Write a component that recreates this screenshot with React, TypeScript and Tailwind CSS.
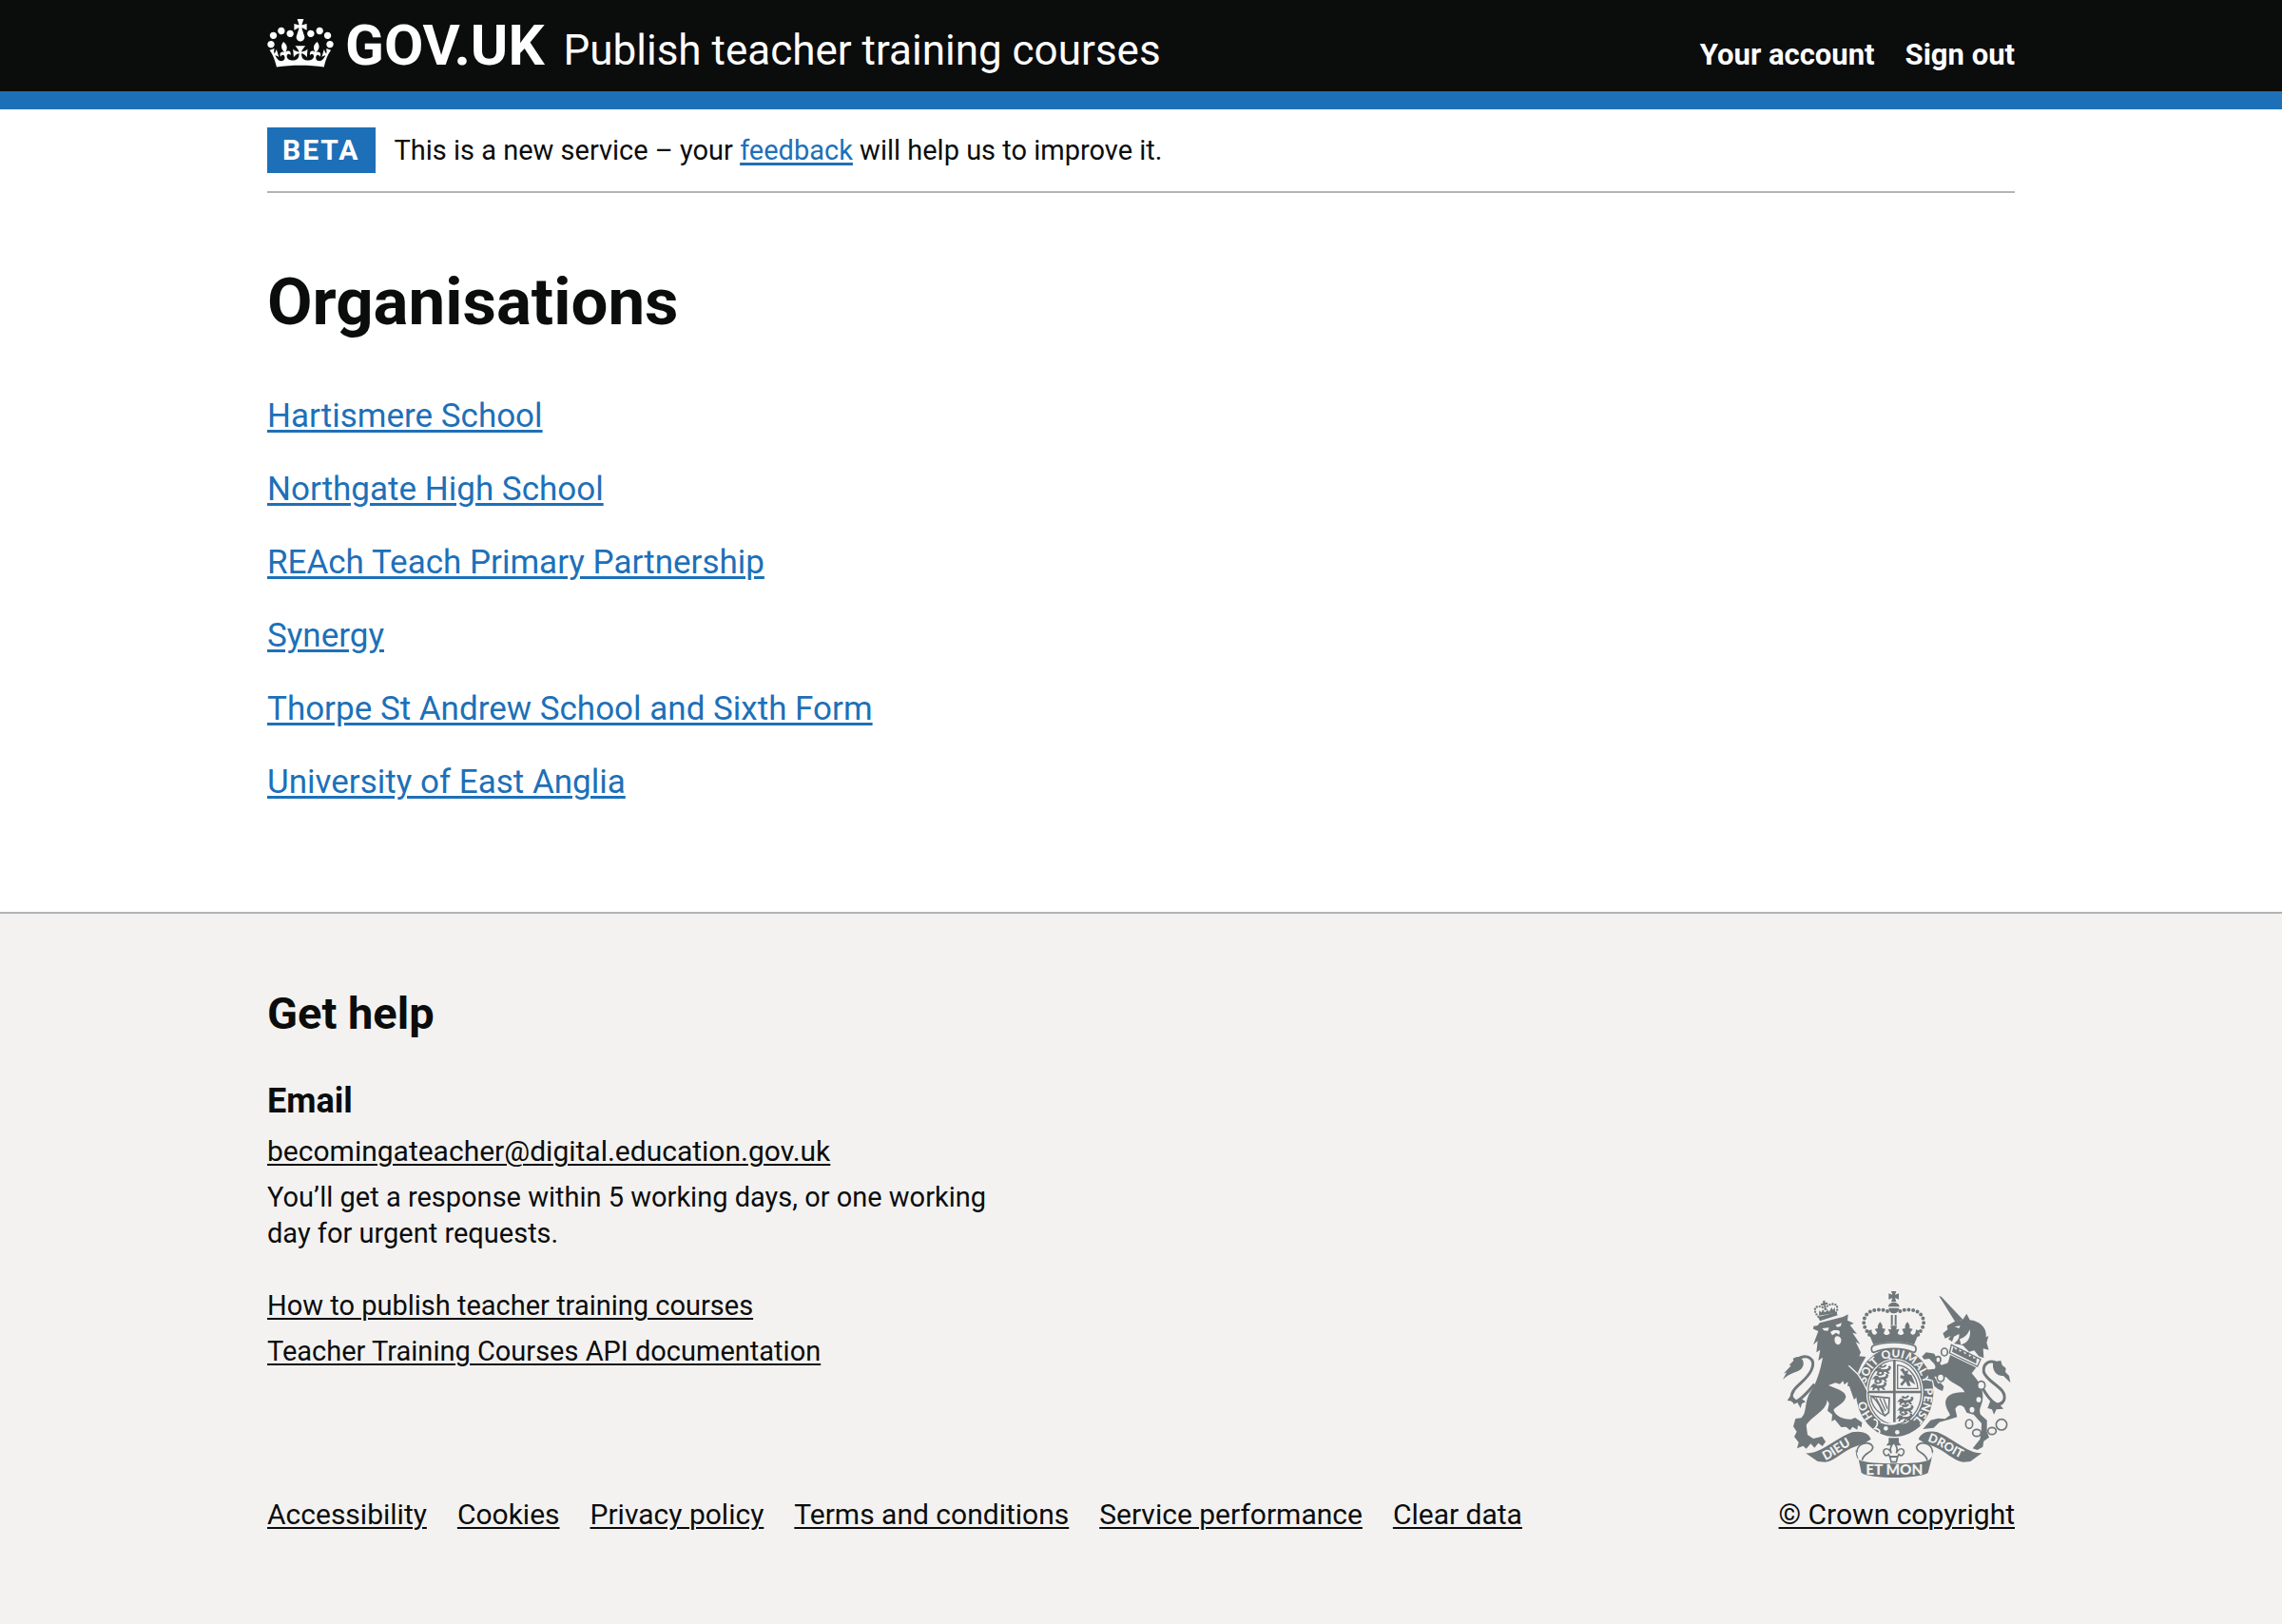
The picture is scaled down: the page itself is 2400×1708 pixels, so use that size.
import React from "react";

const organisations = [
  "Hartismere School",
  "Northgate High School",
  "REAch Teach Primary Partnership",
  "Synergy",
  "Thorpe St Andrew School and Sixth Form",
  "University of East Anglia",
];

const footerLinks = [
  "Accessibility",
  "Cookies",
  "Privacy policy",
  "Terms and conditions",
  "Service performance",
  "Clear data",
];

function Crown() {
  return (
    <svg viewBox="0 0 132 97" className="mt-0.5 h-[51px] w-[70px] shrink-0 self-start fill-white" aria-hidden="true">
      <path
        fillRule="evenodd"
        d="M25 30.2c3.5 1.5 7.7-.2 9.1-3.7 1.5-3.6-.2-7.8-3.9-9.2-3.6-1.4-7.6.3-9.1 3.9-1.4 3.5.3 7.5 3.9 9zM9 39.5c3.6 1.5 7.8-.2 9.2-3.7 1.5-3.6-.2-7.8-3.9-9.1-3.6-1.5-7.6.2-9.1 3.8-1.4 3.5.3 7.5 3.8 9zM4.4 57.2c3.5 1.5 7.7-.2 9.1-3.8 1.5-3.6-.2-7.7-3.9-9.1-3.5-1.5-7.6.3-9.1 3.8-1.4 3.5.3 7.6 3.9 9.1zm38.3-21.4c3.5 1.5 7.7-.2 9.1-3.8 1.5-3.6-.2-7.7-3.9-9.1-3.6-1.5-7.6.3-9.1 3.8-1.3 3.6.4 7.7 3.9 9.1zm64.4-5.6c-3.6 1.5-7.8-.2-9.1-3.7-1.5-3.6.2-7.8 3.8-9.2 3.6-1.4 7.7.3 9.2 3.9 1.3 3.5-.4 7.5-3.9 9zm15.9 9.3c-3.6 1.5-7.7-.2-9.1-3.7-1.5-3.6.2-7.8 3.7-9.1 3.6-1.5 7.7.2 9.2 3.8 1.5 3.5-.3 7.5-3.8 9zm4.7 17.7c-3.6 1.5-7.8-.2-9.2-3.8-1.5-3.6.2-7.7 3.9-9.1 3.6-1.5 7.7.3 9.2 3.8 1.3 3.5-.4 7.6-3.9 9.1zM89.3 35.8c-3.6 1.5-7.8-.2-9.2-3.8-1.4-3.6.2-7.7 3.9-9.1 3.6-1.5 7.7.3 9.2 3.8 1.4 3.6-.3 7.7-3.9 9.1zM69.7 17.7l8.9 4.7V9.3l-8.9 2.8c-.2-.3-.5-.6-.9-.9L72.4 0H59.6l3.5 11.2c-.3.3-.6.5-.9.9l-8.8-2.8v13.1l8.8-4.7c.3.3.6.7.9.9l-5 15.4v.1c-.2.8-.4 1.6-.4 2.4 0 4.1 3.1 7.5 7 8.1h.2c.3 0 .7.1 1 .1.4 0 .7 0 1-.1h.2c4-.6 7.1-4.1 7.1-8.1 0-.8-.1-1.7-.4-2.4V34l-5.1-15.4c.4-.2.7-.6 1-.9zM66 92.8c16.9 0 32.8 1.1 47.1 3.2 4-16.9 8.9-26.7 14-33.5l-9.6-3.4c1 4.9 1.1 7.2 0 10.2-1.5-1.4-3-4.3-4.2-8.7L108.6 76c2.8-2 5-3.2 7.5-3.3-4.4 9.4-10 11.9-13.6 11.2-4.3-.8-6.3-4.6-5.6-7.9 1-4.7 5.7-5.9 8-.5 4.3-8.7-3-11.4-7.6-8.8 7.1-7.2 7.9-13.5 2.1-21.1-8 6.1-8.1 12.3-4.5 20.8-4.7-5.4-12.1-2.5-9.5 6.2 3.4-5.2 7.9-2 7.2 3.1-.6 4.3-6.4 7.8-13.5 7.2-10.3-.9-10.9-8-11.2-13.8 2.5-.5 7.1 1.8 11 7.3L80.2 60c-4.1 4.4-8 5.3-12.3 5.4 1.4-4.4 8-11.6 8-11.6H55.5s6.4 7.2 7.9 11.6c-4.2-.1-8-1-12.3-5.4l1.4 16.4c3.9-5.5 8.5-7.7 10.9-7.3-.3 5.8-.9 12.8-11.1 13.8-7.2.6-12.9-2.9-13.5-7.2-.7-5 3.8-8.3 7.1-3.1 2.7-8.7-4.6-11.6-9.4-6.2 3.7-8.5 3.6-14.7-4.6-20.8-5.8 7.6-5 13.9 2.2 21.1-4.7-2.6-11.9.1-7.7 8.8 2.3-5.5 7.1-4.2 8.1.5.7 3.3-1.3 7.1-5.7 7.9-3.5.7-9-1.8-13.5-11.2 2.5.1 4.7 1.3 7.5 3.3l-4.7-15.4c-1.2 4.4-2.7 7.2-4.3 8.7-1.1-3-.9-5.3 0-10.2l-9.5 3.4c5 6.9 9.9 16.7 14 33.5 14.8-2.1 30.8-3.2 47.7-3.2z"
      />
    </svg>
  );
}

const INK = "#6f777a";
const PAPER = "#f3f2f1";

function SmallLion({ x, y }: { x: number; y: number }) {
  return (
    <path
      transform={`translate(${x} ${y})`}
      d="M0 8l6-6 8 1 4 5 14-1 8-4-2-5 6-2 4 6-4 8-6 4 6 6-6 2-8-7-6 2 2 6-6 1-3-8-6 1-4 6-5-1 3-8-5-1-5 3zM8-2l6-4 8 4 8-6 4 4-8 6-10 1z"
      fill={INK}
    />
  );
}

function RoyalArms() {
  return (
    <svg viewBox="72 57 720 588" className="h-[196px] w-[240px]" fill={INK} aria-hidden="true">
      {/* lion supporter */}
      <path d="M112 274C150 250 178 270 162 306C144 346 96 360 100 394C104 420 130 400 172 350" fill="none" stroke={INK} strokeWidth="9" />
      <path d="M72 336L84 313L74 317L98 292L92 290L106 276L104 270C126 254 148 280 132 300C122 314 94 312 72 336Z" />
      <path d="M98 384L86 402L104 404L106 414L118 408L128 426L132 412L144 406L134 398L116 402Z" />
      <path d="M188 157L262 138L278 130L276 149L296 158L284 164L306 192L292 188L316 224L302 217L318 250L313 262L334 264L320 288L306 320L324 345L336 370L333 398L323 388L316 402L307 390L297 398L291 380L300 371L287 367L292 355L276 357L278 342L266 352L262 340L252 350L238 346L216 354C240 364 270 372 271 390C268 412 238 420 232 432C240 452 262 462 288 461L300 456L322 471L320 487L309 480L307 494L292 485L284 496L272 485L256 486L236 462L226 468L228 446L213 434L218 412L212 400C210 436 164 450 146 480L150 510L168 522L196 515L207 532L197 546L184 536L172 551L160 538L146 554L136 545L117 553L122 534L108 516L116 500L105 484L112 459L130 457C150 440 138 404 162 370C178 346 190 310 198 266L184 276L190 242L178 250L182 214L168 226L184 183L168 176L169 167L182 165Z" />
      <path d="M196 174L218 172L214 182L202 181ZM238 164L258 157L254 168L244 170ZM222 186L232 180L246 180L252 184L250 194L240 188L228 196Z" fill={PAPER} />
      <path d="M236 204C240 196 252 198 256 208C258 220 250 228 244 225C236 222 234 214 236 204Z" fill={PAPER} />
      {/* lion's crown */}
      <path d="M183 138L241 124L245 133L189 151Z" />
      <path d="M184 137C164 116 174 98 198 108M240 124C252 104 236 88 212 104" fill="none" stroke={INK} strokeWidth="7" strokeLinecap="round" strokeDasharray="0 9" />
      <path d="M186 134L187 118L194 124L198 114L204 124L212 118L210 110L218 122L226 108L230 116L236 108L238 126ZM198 88L206 86L205 93L213 92L214 99L206 98L210 116L203 118L202 101L193 103L192 96L199 95Z" />

      {/* garter */}
      <ellipse cx="425" cy="376" rx="126" ry="144" fill={PAPER} />
      <ellipse cx="425" cy="376" rx="122" ry="140" />
      <ellipse cx="425" cy="376" rx="90" ry="107" fill={PAPER} />
      <ellipse cx="425" cy="376" rx="84" ry="101" fill="none" stroke={INK} strokeWidth="4" />
      <path d="M420 276H428V470H420ZM341 371H509V379H341Z" />
      <path id="garter-line" d="M394 481A94 111 0 1 1 456 481" fill="none" />
      <g fill={PAPER} className="font-[Lato] text-[36px] font-black" textAnchor="middle">
        <text><textPath href="#garter-line" startOffset="13%">HO</textPath></text>
        <text><textPath href="#garter-line" startOffset="34%">SOIT</textPath></text>
        <text><textPath href="#garter-line" startOffset="49%">QUI</textPath></text>
        <text><textPath href="#garter-line" startOffset="62%">MAL</textPath></text>
        <text><textPath href="#garter-line" startOffset="71%">Y</textPath></text>
        <text><textPath href="#garter-line" startOffset="85%">PENSE</textPath></text>
      </g>
      {/* lion's foreleg resting on the garter */}
      <path d="M284 290L312 318L326 346L337 370L334 398L324 388L316 402L307 390L297 398L290 380L276 340Z" />
      <path d="M280 292L308 318L326 346L340 374" fill="none" stroke={PAPER} strokeWidth="4" />
      {/* quarterings */}
      <SmallLion x={366} y={296} />
      <SmallLion x={358} y={321} />
      <SmallLion x={352} y={347} />
      <SmallLion x={437} y={393} />
      <SmallLion x={437} y={420} />
      <SmallLion x={434} y={446} />
      <path d="M434 290C468 292 496 326 498 364H434Z" fill="none" stroke={INK} strokeWidth="4" />
      <path d="M442 304L452 300L458 310L468 306L466 318L478 322L490 352L480 346L470 338L476 356L466 356L460 342L448 356L442 350L454 336L442 330L444 322L456 324L450 314Z" />
      <path d="M352 388L408 394L406 440L394 450C382 438 382 410 352 388Z" fill="none" stroke={INK} strokeWidth="5" />
      <path d="M350 388C350 418 372 442 396 450M366 394L390 438M378 395L396 434M390 396L402 428" fill="none" stroke={INK} strokeWidth="4" />
      {/* buckle and strap */}
      <path d="M356 458C376 458 372 480 396 476C430 480 470 476 500 462L506 482C470 514 410 524 368 500L352 478Z" />
      <path d="M358 462C374 460 374 480 362 490C380 492 380 502 374 506M380 470C420 484 440 474 456 460" fill="none" stroke={PAPER} strokeWidth="5" />
      <circle cx="397" cy="490" r="7" fill={PAPER} />
      <circle cx="433" cy="502" r="7" fill={PAPER} />

      {/* imperial crown */}
      <path d="M414 57H430L426 68L438 64V83L426 78L430 90H414L418 78L406 83V64L418 68Z" />
      <path d="M405 106C406 88 438 88 440 106ZM406 110H439C438 122 430 127 422 127C414 127 407 122 406 110Z" />
      <path d="M413 132H419V164H413ZM425 132H431V164H425Z" />
      <path d="M402 120C384 112 336 110 328 148C325 172 340 184 346 196M442 120C460 112 508 110 516 148C519 172 504 184 498 196" fill="none" stroke={INK} strokeWidth="12" strokeLinecap="round" strokeDasharray="0 14" />
      <path d="M340 182L352 178C352 190 356 196 364 194L370 188L362 176L372 174C370 166 374 160 379 154C384 160 388 166 386 174L396 176L390 190C396 198 404 196 410 190L404 176L414 178L412 166H432L430 178L440 176L434 190C440 196 448 198 454 190L448 176L458 174C456 166 460 160 465 154C470 160 474 166 472 174L482 176L474 188L480 194C488 196 492 190 492 178L504 182L486 226C450 214 394 214 358 226Z" />
      <path d="M360 228C394 216 450 216 484 228C496 230 494 250 484 250C450 234 394 234 360 250C350 250 348 230 360 228Z" fill={PAPER} stroke={INK} strokeWidth="5" />

      {/* unicorn supporter */}
      <path d="M704 366C724 400 754 434 770 400C782 362 716 346 706 312C702 282 728 272 748 284" fill="none" stroke={INK} strokeWidth="9" />
      <path d="M736 280L760 276L764 290L776 300L774 312L786 324L790 346L768 324C748 326 730 308 736 280Z" />
      <path d="M728 400L718 426L732 430L738 446L746 430L768 428L758 416L766 402L744 414Z" />
      <path d="M565 72L572 74L640 146L616 154Z" />
      <path d="M612 154L640 146L652 128L662 148C690 150 718 172 713 202L721 198L715 220L722 242L704 238L706 268L690 262L676 244L660 248L640 228L612 222C626 212 630 202 628 192L612 200L606 216L594 208L602 198L584 206L577 190L592 178L590 166Z" />
      <path d="M614 169L632 166L628 174ZM634 226C658 220 666 200 662 178C654 196 644 204 630 208Z" fill={PAPER} />
      <path d="M604 226L696 272L686 294L598 252Z" fill={PAPER} stroke={INK} strokeWidth="4" />
      <path d="M606 248L610 232L618 242L626 234L630 248L640 242L646 256L658 248L660 264L670 258L674 270L684 266L682 286Z" />
      <path d="M600 258L682 298L668 316C690 340 708 370 702 400C700 420 688 430 696 446L716 464L716 500L723 518L706 530L703 548L686 558L671 553L694 524L698 500L699 474L674 446L652 440L644 424C634 412 622 416 616 428L622 454L596 462L566 470L548 488L514 492L538 464L562 458L584 460L600 448C596 438 582 420 586 402C592 380 618 376 646 376C634 350 598 350 584 322L580 298L594 280Z" />
      <path d="M511 263L524 250L550 254L558 270L572 290L590 284V314L556 320L546 312C552 302 558 296 548 284L534 270L518 272Z" />
      <path d="M588 306L550 302L524 305L532 330L546 338L550 356L562 366L576 372L580 358L570 346L562 348L550 326L590 328Z" />
      <g fill={PAPER} stroke={INK} strokeWidth="5">
        <ellipse cx="582" cy="249" rx="10" ry="12" />
        <ellipse cx="562" cy="273" rx="8" ry="10" />
        <ellipse cx="570" cy="330" rx="11" ry="12" />
        <ellipse cx="698" cy="354" rx="12" ry="13" />
        <ellipse cx="690" cy="399" rx="10" ry="11" />
        <ellipse cx="669" cy="431" rx="10" ry="11" />
        <ellipse cx="660" cy="476" rx="11" ry="14" />
        <ellipse cx="684" cy="504" rx="13" ry="11" />
        <ellipse cx="732" cy="498" rx="13" ry="11" />
        <circle cx="762" cy="478" r="17" />
      </g>

      {/* motto ribbon */}
      <path d="M144 568C190 572 240 520 290 502C320 496 344 504 350 524L330 536L304 546C268 556 232 596 206 596L182 594Z" />
      <path d="M700 568C656 570 606 520 560 502C528 494 508 504 500 524L520 536L546 546C580 558 616 596 642 596L664 594Z" />
      <path d="M306 566C304 536 348 526 356 548C358 568 330 562 322 590M544 566C546 536 502 526 494 548C492 568 520 562 528 590" fill={PAPER} stroke={INK} strokeWidth="5" />
      <path d="M302 556C302 578 308 588 314 590C350 604 500 604 532 590C540 586 546 574 546 556L540 592L530 630C500 650 346 650 320 630L312 592Z" />
      <path id="dieu-line" d="M206 591C240 576 262 553 308 533" fill="none" />
      <path id="droit-line" d="M528 530C576 544 604 576 656 592" fill="none" />
      <g fill={PAPER} className="font-[Lato] font-black">
        <text className="text-[40px]"><textPath href="#dieu-line">DIEU</textPath></text>
        <text className="text-[38px]"><textPath href="#droit-line">DROIT</textPath></text>
        <text x="424" y="636" textAnchor="middle" className="text-[46px]">ET MON</text>
      </g>
      {/* fleur-de-lis */}
      <path d="M406 520H438V534L446 544H398L406 534Z" />
      <path d="M422 534C434 548 434 556 430 568C440 548 456 552 454 566C452 576 444 578 438 572L434 580L430 596H414L410 580L406 572C400 578 392 576 390 566C388 552 406 548 414 568C410 556 410 548 422 534Z" fill={PAPER} stroke={INK} strokeWidth="5" />
      <path d="M410 576H434V582H410Z" />
    </svg>
  );
}

const darkLink = "underline decoration-2 underline-offset-[3px]";

export default function App() {
  return (
    <div className="flex min-h-screen flex-col bg-white font-[Roboto,sans-serif] text-[#0b0c0c]">
      <header className="border-b-[19px] border-[#1d70b8] bg-[#0b0c0c] text-white">
        <div className="mx-auto flex max-w-[1838px] items-baseline justify-between py-[18px]">
          <div className="flex items-baseline gap-5">
            <a href="#" className="flex items-baseline gap-3">
              <Crown />
              <span className="text-[60px] leading-[60px] font-bold">GOV.UK</span>
            </a>
            <a href="#" className="text-[44px] leading-[48px]">Publish teacher training courses</a>
          </div>
          <nav className="flex gap-8 text-[31px] leading-[38px] font-bold">
            <a href="#">Your account</a>
            <a href="#">Sign out</a>
          </nav>
        </div>
      </header>

      <div className="mx-auto w-full max-w-[1838px]">
        <div className="flex items-baseline gap-5 border-b-2 border-[#b3b3b3] py-[19px]">
          <strong className="bg-[#1d70b8] px-4 text-[30px] leading-[48px] font-bold tracking-[2px] text-white">BETA</strong>
          <p className="text-[29px] leading-[38px]">
            This is a new service – your{" "}
            <a href="#" className="text-[#1d70b8] underline decoration-[3px] underline-offset-[3px]">feedback</a> will help us to improve it.
          </p>
        </div>
        <main className="pt-[77px] pb-[112px]">
          <h1 className="mb-[58px] text-[69px] leading-[76px] font-bold">Organisations</h1>
          <ul className="flex flex-col gap-[29px] text-[35px] leading-[48px] text-[#1d70b8]">
            {organisations.map((name) => (
              <li key={name}>
                <a href="#" className="underline decoration-[3px] underline-offset-[3px]">{name}</a>
              </li>
            ))}
          </ul>
        </main>
      </div>

      <footer className="flex-1 border-t-2 border-[#b1b4b6] bg-[#f3f2f1] pt-[77px] pb-24">
        <div className="mx-auto flex max-w-[1838px] items-end justify-between text-[30px] leading-[38px]">
          <div>
            <h2 className="text-[47px] leading-[56px] font-bold">Get help</h2>
            <h3 className="mt-10 text-[36px] leading-[48px] font-bold">Email</h3>
            <ul className="mt-2.5 flex max-w-[800px] flex-col gap-2.5">
              <li><a href="#" className={darkLink}>becomingateacher@digital.education.gov.uk</a></li>
              <li className="text-[29px]">You’ll get a response within 5 working days, or one working day for urgent requests.</li>
            </ul>
            <ul className="mt-[38px] flex flex-col gap-2.5 text-[29px]">
              <li><a href="#" className={darkLink}>How to publish teacher training courses</a></li>
              <li><a href="#" className={darkLink}>Teacher Training Courses API documentation</a></li>
            </ul>
            <ul className="mt-[134px] flex gap-8">
              {footerLinks.map((label) => (
                <li key={label}><a href="#" className={darkLink}>{label}</a></li>
              ))}
            </ul>
          </div>
          <div className="flex flex-col items-center gap-5">
            <RoyalArms />
            <a href="#" className={darkLink}>© Crown copyright</a>
          </div>
        </div>
      </footer>
    </div>
  );
}
